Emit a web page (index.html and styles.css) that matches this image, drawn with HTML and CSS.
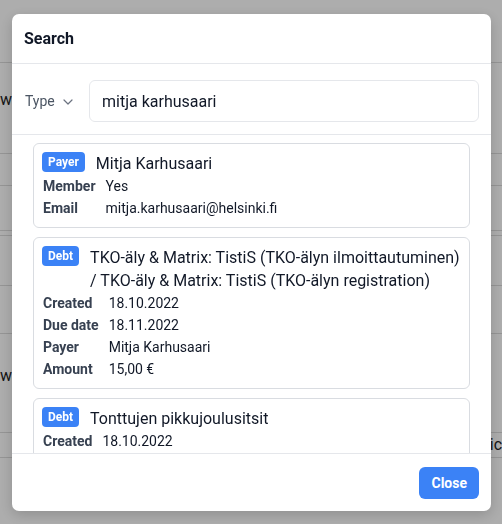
FILE: index.html
```html
<!DOCTYPE html>
<html lang="fi">
<head>
<meta charset="utf-8">
<title>Search</title>
<link rel="stylesheet" href="styles.css">
</head>
<body>
<div class="page">
  <div class="bg-row r1"></div>
  <div class="bg-row r2"><span class="bg-text">wi</span></div>
  <div class="bg-row r3"></div>
  <div class="bg-row r4"></div>
  <div class="bg-row r5"></div>
  <div class="bg-row r6"></div>
  <div class="bg-row r7"></div>
  <div class="bg-row r8"><span class="bg-text">w</span></div>
  <div class="bg-row r9"><span></span><span class="bg-text">ic</span></div>
</div>
<div class="overlay"></div>
<div class="modal">
  <div class="modal-header">Search</div>
  <div class="modal-filter">
    <div class="type-select">Type
      <svg class="chev" width="10" height="6" viewBox="0 0 10 6"><path d="M1 1l4 4 4-4" fill="none" stroke="#6b7280" stroke-width="1.2" stroke-linecap="round" stroke-linejoin="round"/></svg>
    </div>
    <div class="search-input">mitja karhusaari</div>
  </div>
  <div class="modal-list">
    <div class="card">
      <div class="card-title"><span class="badge">Payer</span><span class="title-text">Mitja Karhusaari</span></div>
      <div class="fields">
        <span class="label">Member</span><span class="value">Yes</span>
        <span class="label">Email</span><span class="value">mitja.karhusaari@helsinki.fi</span>
      </div>
    </div>
    <div class="card">
      <div class="card-title"><span class="badge">Debt</span><span class="title-text">TKO-äly &amp; Matrix: TistiS (TKO-älyn ilmoittautuminen) / TKO-äly &amp; Matrix: TistiS (TKO-älyn registration)</span></div>
      <div class="fields">
        <span class="label">Created</span><span class="value">18.10.2022</span>
        <span class="label">Due date</span><span class="value">18.11.2022</span>
        <span class="label">Payer</span><span class="value">Mitja Karhusaari</span>
        <span class="label">Amount</span><span class="value">15,00 €</span>
      </div>
    </div>
    <div class="card">
      <div class="card-title"><span class="badge">Debt</span><span class="title-text">Tonttujen pikkujoulusitsit</span></div>
      <div class="fields">
        <span class="label">Created</span><span class="value">18.10.2022</span>
      </div>
    </div>
  </div>
  <div class="modal-footer"><button class="btn-close">Close</button></div>
</div>
</body>
</html>
```
FILE: styles.css
```css
html, body {
  margin: 0;
  padding: 0;
  background: #ffffff;
  font-family: Roboto, "Liberation Sans", sans-serif;
  color: #111827;
}
.page {
  width: 502px;
  height: 524px;
  overflow: hidden;
}
.bg-row {
  border-bottom: 1px solid #dcdcdc;
  box-sizing: border-box;
  display: flex;
  justify-content: space-between;
  align-items: center;
  font-size: 16px;
  color: #222;
}
.r1 { height: 63px; }
.r2 { height: 91px; padding-bottom: 16px; }
.r3 { height: 32px; }
.r4 { height: 45px; }
.r5 { height: 5px; }
.r6 { height: 50px; }
.r7 { height: 48px; }
.r8 { height: 99px; padding-bottom: 14px; }
.r9 { height: 25px; }
.bg-text { line-height: 20px; }
.overlay {
  position: fixed;
  inset: 0;
  background: rgba(0, 0, 0, 0.32);
}
.modal {
  position: fixed;
  top: 14px;
  left: 12px;
  width: 479px;
  height: 497px;
  background: #fff;
  border-radius: 7px;
  box-shadow: 0 4px 14px rgba(0, 0, 0, 0.18);
  display: flex;
  flex-direction: column;
  overflow: hidden;
}
.modal-header {
  height: 50px;
  box-sizing: border-box;
  border-bottom: 1px solid #e5e7eb;
  padding: 0 12px;
  display: flex;
  align-items: center;
  font-weight: 700;
  font-size: 16px;
  color: #111827;
}
.modal-filter {
  padding: 16px 12px 12px;
  border-bottom: 1px solid #e5e7eb;
  display: flex;
  align-items: center;
  gap: 16px;
}
.type-select {
  display: flex;
  align-items: center;
  gap: 8px;
  font-size: 14px;
  color: #4b5563;
  width: 48px;
  padding-left: 1px;
}
.chev { display: block; margin-top: 1px; }
.search-input {
  flex: 1;
  height: 42px;
  box-sizing: border-box;
  border: 1px solid #e5e7eb;
  border-radius: 6px;
  padding: 0 12px;
  display: flex;
  align-items: center;
  font-size: 16px;
  color: #111827;
}
.modal-list {
  flex: 1;
  min-height: 0;
  overflow: hidden;
  padding: 8px 21px 0;
  display: flex;
  flex-direction: column;
  gap: 9px;
}
.card {
  flex-shrink: 0;
  border: 1px solid #d9dce1;
  border-radius: 6px;
  padding: 8px;
}
.card-title {
  display: flex;
  align-items: flex-start;
  gap: 11px;
}
.badge {
  flex-shrink: 0;
  background: #3b82f6;
  color: #fff;
  font-size: 12px;
  font-weight: 700;
  line-height: 20px;
  padding: 0 6px;
  border-radius: 4px;
}
.title-text {
  font-size: 16px;
  line-height: 23px;
  color: #111827;
}
.fields {
  display: grid;
  grid-template-columns: auto 1fr;
  column-gap: 10px;
  font-size: 14px;
  line-height: 22px;
}
.label {
  font-weight: 700;
  color: #374151;
  padding-left: 1px;
}
.value { color: #111827; }
.modal-footer {
  border-top: 1px solid #e5e7eb;
  padding: 13px 12px 12px;
  display: flex;
  justify-content: flex-end;
}
.btn-close {
  height: 32px;
  padding: 0 12px;
  border: none;
  border-radius: 6px;
  background: #3b82f6;
  color: #fff;
  font-family: Roboto, "Liberation Sans", sans-serif;
  font-weight: 700;
  font-size: 14px;
}
```
